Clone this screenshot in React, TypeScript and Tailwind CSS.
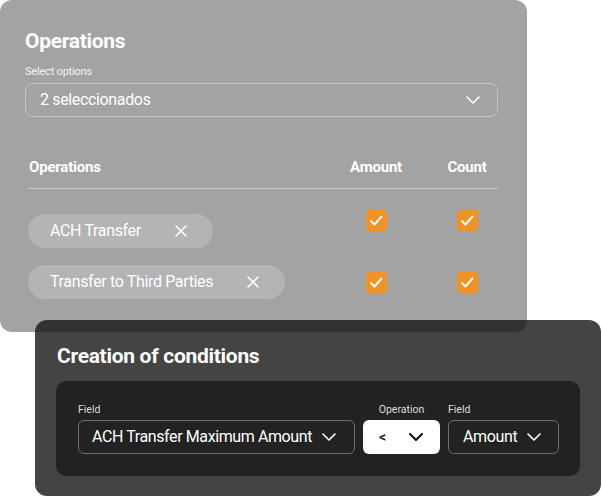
import React from "react";

const font = { fontFamily: "Roboto, 'Liberation Sans', Arial, sans-serif" };

function Chevron({ className = "", color = "white", width = 1.6 }: { className?: string; color?: string; width?: number }) {
  return (
    <svg className={className} width="14" height="8" viewBox="0 0 14 8" fill="none">
      <polyline points="1,1 7,7 13,1" stroke={color} strokeWidth={width} strokeLinecap="round" strokeLinejoin="round" />
    </svg>
  );
}

function XIcon() {
  return (
    <svg width="12" height="12" viewBox="0 0 12 12" fill="none">
      <path d="M1 1L11 11M11 1L1 11" stroke="white" strokeWidth="1.6" strokeLinecap="round" />
    </svg>
  );
}

function Check() {
  return (
    <div className="w-[21px] h-[21px] rounded-[4px] bg-[#ef9326] flex items-center justify-center">
      <svg width="21" height="21" viewBox="0 0 21 21" fill="none">
        <polyline points="5,11 8.5,14.5 15.5,6.5" stroke="white" strokeWidth="1.9" strokeLinecap="round" strokeLinejoin="round" />
      </svg>
    </div>
  );
}

function Chip({ label }: { label: string }) {
  return (
    <div className="h-[34px] rounded-full bg-[#b4b4b4] pl-[22px] pr-[26px] flex items-center gap-[34px] text-white text-[16px] tracking-[-0.35px]">
      <span>{label}</span>
      <XIcon />
    </div>
  );
}

export default function App() {
  return (
    <div className="w-[602px] h-[498px] bg-white overflow-hidden" style={font}>
      <div className="relative z-10 w-[527px] h-[332px] rounded-[12px] bg-[rgba(26,26,26,0.4)] pt-[29px] px-[25px] text-white">
        <div className="text-[21px] leading-[24px] font-bold tracking-[-0.3px]">Operations</div>
        <div className="mt-[12px] text-[11px] leading-[14px] text-[#f2f2f2] tracking-[-0.2px]">Select options</div>
        <div className="mt-[4px] w-[473px] h-[34px] rounded-[8px] border border-[#c4c4c4] flex items-center justify-between pl-[14px] pr-[17px]">
          <span className="text-[16px] tracking-[-0.35px]">2 seleccionados</span>
          <Chevron />
        </div>
        <div className="ml-[3px] w-[470px]">
          <div className="mt-[40px] pb-[11px] border-b border-[#c8c8c8] flex text-[15px] leading-[20px] font-bold tracking-[-0.2px]">
            <div className="w-[308px] pl-[1px]">Operations</div>
            <div className="w-[80px] text-center">Amount</div>
            <div className="ml-[20px] w-[62px] text-center">Count</div>
          </div>
          <div className="mt-[21px] flex items-start">
            <div className="w-[308px] mt-[4px] flex">
              <Chip label="ACH Transfer" />
            </div>
            <div className="w-[80px] flex justify-center"><Check /></div>
            <div className="ml-[20px] w-[62px] flex justify-center"><Check /></div>
          </div>
          <div className="mt-[17px] flex items-start">
            <div className="w-[308px] flex">
              <Chip label="Transfer to Third Parties" />
            </div>
            <div className="w-[80px] mt-[7px] flex justify-center"><Check /></div>
            <div className="ml-[20px] mt-[7px] w-[62px] flex justify-center"><Check /></div>
          </div>
        </div>
      </div>

      <div className="ml-[35px] -mt-[12px] w-[566px] h-[176px] rounded-[12px] bg-[#444444] pt-[24px] pl-[22px] text-white">
        <div className="text-[21px] leading-[24px] font-bold tracking-[-0.3px]">Creation of conditions</div>
        <div className="mt-[13px] -ml-[1px] w-[524px] h-[95px] rounded-[10px] bg-[#222222] pt-[22px] pl-[22px] flex gap-[8px]">
          <div className="flex flex-col">
            <div className="text-[10.5px] leading-[13px] text-[#dddddd]">Field</div>
            <div className="mt-[4px] w-[277px] h-[34px] rounded-[6px] border border-[#6e6e6e] flex items-center justify-between pl-[13px] pr-[18px]">
              <span className="text-[16px] tracking-[-0.4px]">ACH Transfer Maximum Amount</span>
              <Chevron />
            </div>
          </div>
          <div className="flex flex-col items-center">
            <div className="text-[10.5px] leading-[13px] text-[#dddddd]">Operation</div>
            <div className="mt-[4px] w-[77px] h-[34px] rounded-[6px] bg-white flex items-center justify-between pl-[16px] pr-[17px] text-[#111]">
              <span className="text-[14px] font-medium">&lt;</span>
              <Chevron color="#111" width={2} />
            </div>
          </div>
          <div className="flex flex-col">
            <div className="text-[10.5px] leading-[13px] text-[#dddddd]">Field</div>
            <div className="mt-[4px] w-[111px] h-[34px] rounded-[6px] border border-[#6e6e6e] flex items-center justify-between pl-[14px] pr-[17px]">
              <span className="text-[16px] tracking-[-0.35px]">Amount</span>
              <Chevron />
            </div>
          </div>
        </div>
      </div>
    </div>
  );
}
